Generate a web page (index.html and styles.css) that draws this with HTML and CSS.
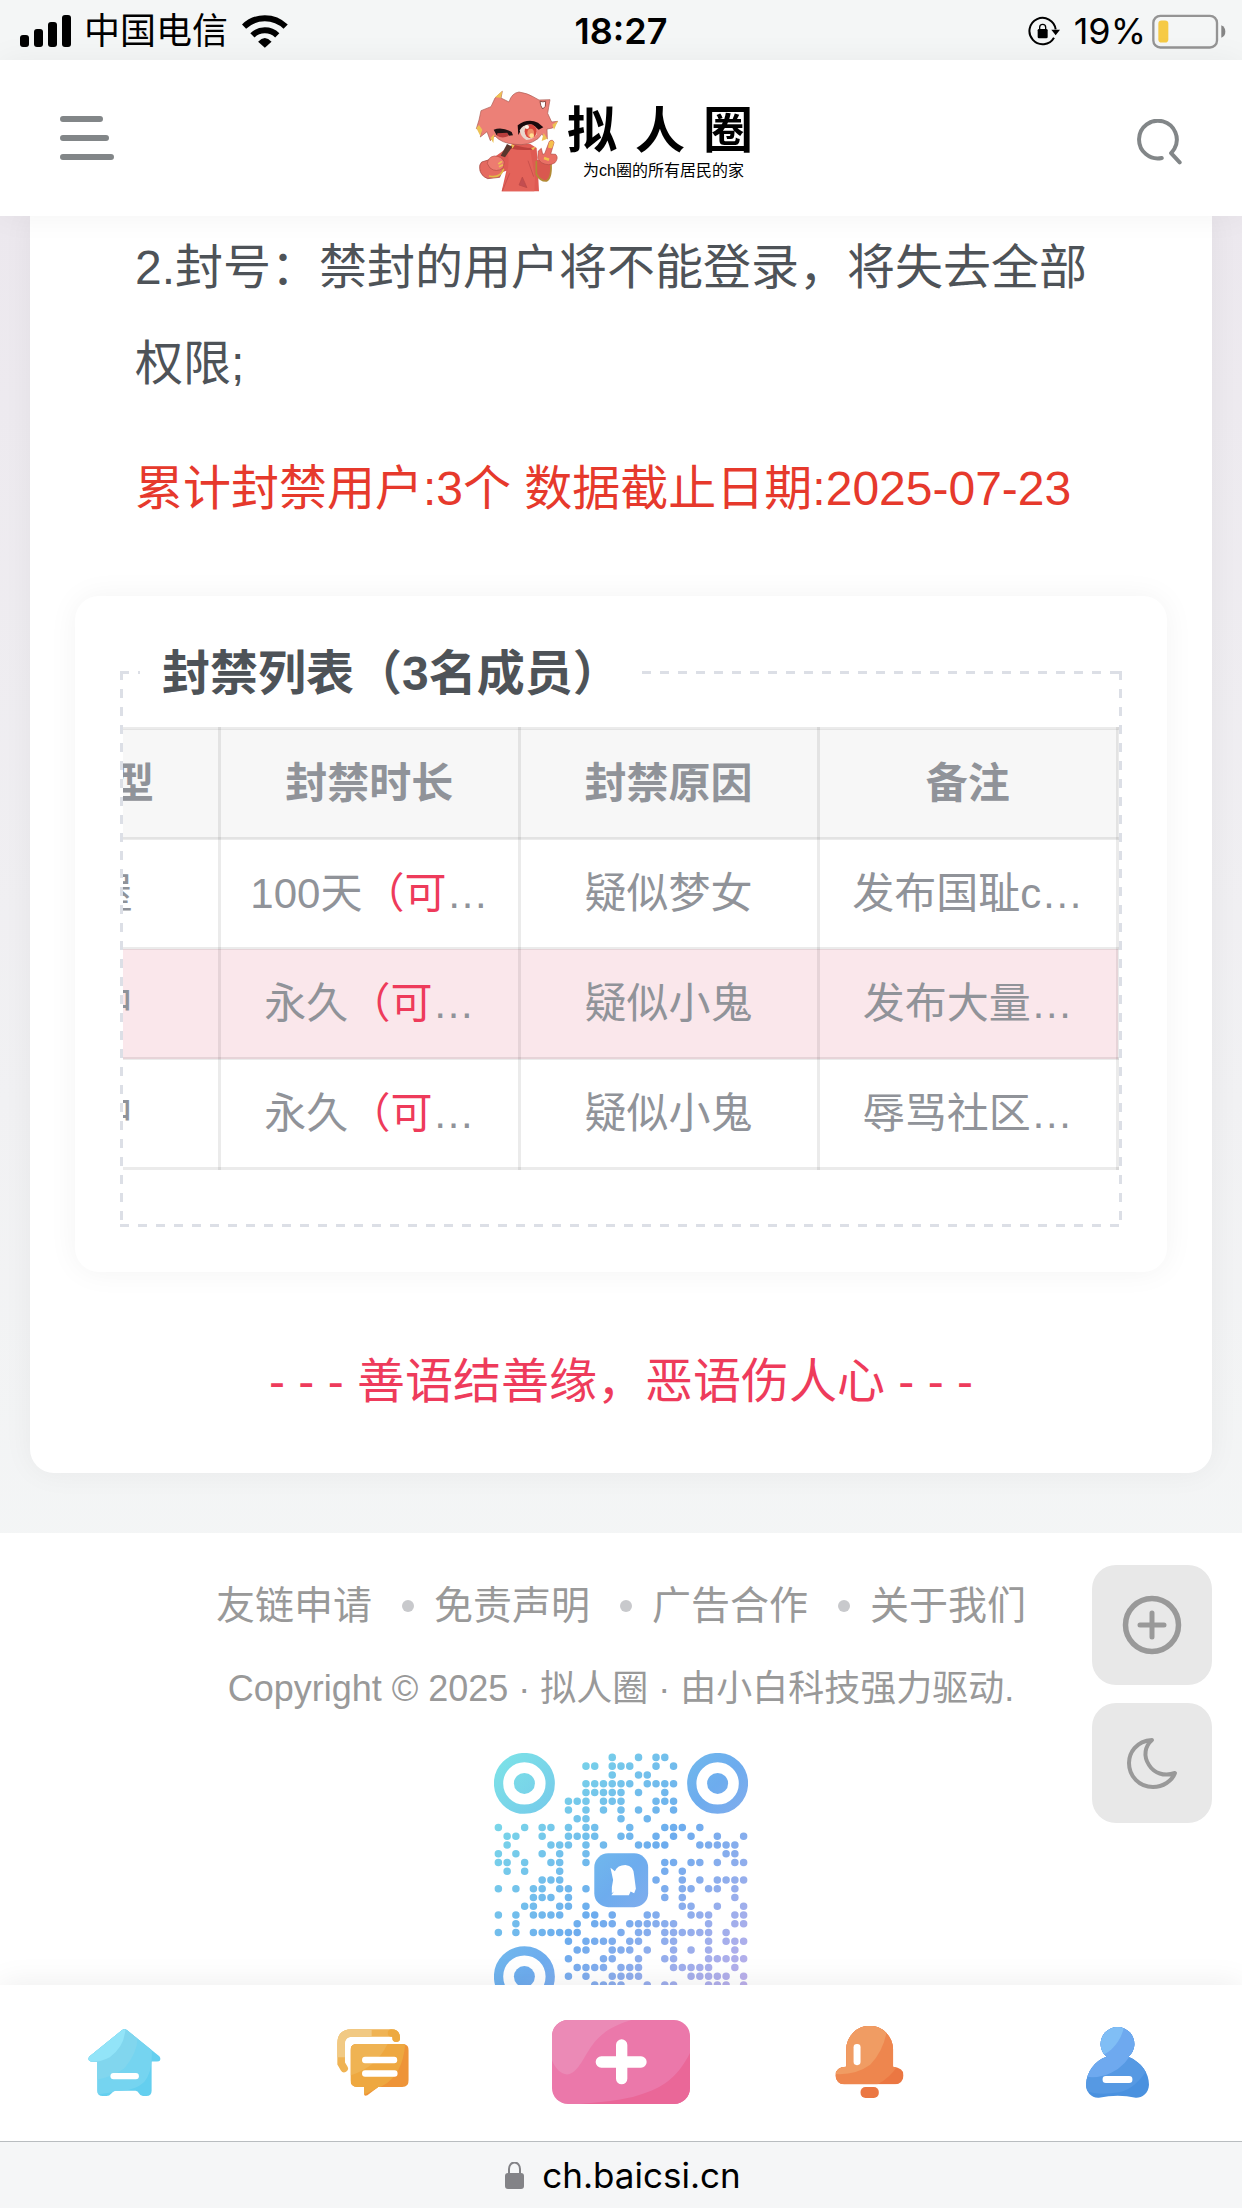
FILE: index.html
```html
<!DOCTYPE html>
<html lang="zh-CN">
<head>
<meta charset="utf-8">
<meta name="viewport" content="width=device-width, initial-scale=1">
<title>拟人圈</title>
<link rel="stylesheet" href="styles.css">
</head>
<body>
<div class="status">
  <div class="status-side">
    <svg class="signal" viewBox="0 0 51 32" aria-hidden="true"><rect x="0" y="20" width="9" height="12" rx="3"/><rect x="14" y="14" width="9" height="18" rx="3"/><rect x="28" y="7" width="9" height="25" rx="3"/><rect x="42" y="0" width="9" height="32" rx="3"/></svg>
    <span class="carrier">中国电信</span>
    <svg class="wifi" viewBox="730 38 137 100" aria-hidden="true"><path d="M736 75A89 89 0 0 1 860 75" fill="none" stroke="#000" stroke-width="18"/><path d="M761 101A53 53 0 0 1 835 101" fill="none" stroke="#000" stroke-width="18"/><path d="M778 120Q798 98 818 120L798 138Z"/></svg>
  </div>
  <time class="clock">18:27</time>
  <div class="status-side status-end">
    <svg class="rotation" viewBox="142 50 96 90" aria-hidden="true"><path d="M220 115A39.500 39.500 0 1 1 225 90" fill="none" stroke="#000" stroke-width="6"/><path d="M212 91H238L225 108Z"/><rect x="171" y="89" width="30" height="28" rx="4"/><path d="M177 90V84a9 9 0 0 1 18 0V90" fill="none" stroke="#000" stroke-width="4"/></svg>
    <span class="percent">19%</span>
    <svg class="battery" viewBox="518 38 222 104" aria-hidden="true"><rect x="522" y="43" width="191" height="95" rx="21" fill="none" stroke="#949494" stroke-width="7"/><rect x="537" y="57" width="30" height="66" rx="10" fill="#f6ca45"/><path d="M726 71Q738 76 738 90T726 109Z" fill="#858585"/></svg>
  </div>
</div>

<header class="header">
  <button class="icon-button" type="button" aria-label="菜单">
    <svg class="menu-icon" viewBox="0 0 54 44"><path d="M3 3H40M3 22H46M3 41H51" stroke="#828688" stroke-width="6" stroke-linecap="round"/></svg>
  </button>
  <a class="logo" href="#">
    <svg class="mascot" viewBox="46 86 252 310" aria-hidden="true">
      <path d="M138 265L160 250H212L231 262L238 392H126L140 330L98 345L60 330L66 308L92 298Z" fill="#df5a53"/>
      <path d="M60 324Q62 345 84 354L120 350L129 328L116 305L92 296L66 304Q58 312 60 324Z" fill="#e56a60" stroke="#9b3f37" stroke-width="2"/>
      <path d="M88 346Q122 354 132 324" fill="none" stroke="#e2bb45" stroke-width="5"/>
      <path d="M230 296L228 340Q238 362 260 361Q278 352 273 308Z" fill="#d9584f"/>
      <path d="M230 300V340Q242 362 260 361Q276 354 274 310" fill="none" stroke="#b28b35" stroke-width="5"/>
      <path d="M141 272Q158 300 126 392H224L226 352L210 258H160Z" fill="#e4635a"/>
      <path d="M188 349L202 381L178 373ZM150 338L128 391M205 300L222 348" fill="#c34d50" stroke="#bd4945" stroke-width="2"/>
      <path d="M58 178L64 150L94 138L106 112L128 92L124 112L148 124Q156 97 178 94Q204 98 220 108L238 118L271 117Q266 145 264 158L276 184L294 182L279 202L262 205L263 235L246 221L235 234Q203 257 166 251Q126 248 106 226L92 240L82 213L62 229L66 207L50 204Z" fill="#ec8077" stroke="#a95b52" stroke-width="2"/>
      <path d="M106 110L128 91L124 111ZM50 202L58 193L68 207L62 226ZM278 192L295 180L283 207ZM252 217L263 234L246 241ZM92 232L104 220L101 247Z" fill="#edc255"/>
      <path d="M241 122Q250 125 258 122L257 137L249 145Q242 137 241 122Z" fill="#fff" stroke="#8d4b43" stroke-width="3"/>
      <path d="M102 207Q128 198 156 214L160 224L148 225L144 219L111 224Z" fill="#201315"/>
      <path d="M112 225Q127 235 147 226L143 216L113 218Z" fill="#b83d3c"/>
      <path d="M174 194Q204 172 235 186L251 200L237 207L224 196L190 197L176 223Z" fill="#19090c"/>
      <path d="M180 209Q190 190 217 192Q233 200 231 221Q222 237 200 238Q184 231 180 209Z" fill="#ead7ce"/>
      <ellipse cx="213" cy="212" rx="18" ry="21" fill="#d9473e"/><ellipse cx="213" cy="217" rx="10" ry="13" fill="#ef8d66"/><circle cx="216" cy="225" r="7" fill="#ffdf91"/><circle cx="202" cy="199" r="6" fill="#fff0e6"/>
      <path d="M158 251Q190 263 227 262L218 267Q180 270 154 264Z" fill="#bd413d"/>
      <path d="M154 251L165 254L158 264ZM214 262L229 258L220 269Z" fill="#edc255"/>
      <path d="M142 250L158 258L136 290L123 285Z" fill="#59362d"/>
      <path d="M83 309Q85 289 104 286Q126 286 134 304L130 322Q110 337 91 322Z" fill="#ed7c70" stroke="#b34d45" stroke-width="2"/>
      <path d="M116 310L127 302M118 318L130 312" stroke="#edc255" stroke-width="5"/>
      <path d="M236 271L245 263L249 281L255 279L269 242Q280 234 283 246L273 280L288 281Q298 292 286 306Q268 318 245 306L234 293Z" fill="#e96f65" stroke="#b34d45" stroke-width="2"/>
      <path d="M268 245Q278 234 283 246L277 263L265 261Z" fill="#f5c04e"/><path d="M253 292L268 297" stroke="#f2c14e" stroke-width="8"/>
    </svg>
    <span class="logo-words">
      <span class="logo-name"><span>拟</span><span>人</span><span>圈</span></span>
      <span class="logo-tag">为ch圈的所有居民的家</span>
    </span>
  </a>
  <button class="icon-button search" type="button" aria-label="搜索">
    <svg class="search-icon" viewBox="471 359 136 137"><path d="M546 476A57 57 0 1 1 584 448Q579 456 574 461L600 489" fill="none" stroke="#828688" stroke-width="12" stroke-linecap="round" stroke-linejoin="round"/></svg>
  </button>
</header>

<main class="page">
  <article class="card">
    <div class="prose">
      <p>2.封号：禁封的用户将不能登录，将失去全部权限;</p>
      <p class="total">累计封禁用户:3个 数据截止日期:2025-07-23</p>
    </div>
    <section class="panel">
      <fieldset class="list">
        <legend>封禁列表（3名成员）</legend>
        <div class="scroller">
          <table>
            <thead>
              <tr><th>封禁类型</th><th>封禁时长</th><th>封禁原因</th><th>备注</th></tr>
            </thead>
            <tbody>
              <tr><td>小黑屋</td><td>100天<em>（可</em>…</td><td>疑似梦女</td><td>发布国耻c…</td></tr>
              <tr class="marked"><td>封禁中</td><td>永久<em>（可</em>…</td><td>疑似小鬼</td><td>发布大量…</td></tr>
              <tr><td>封禁中</td><td>永久<em>（可</em>…</td><td>疑似小鬼</td><td>辱骂社区…</td></tr>
            </tbody>
          </table>
        </div>
      </fieldset>
    </section>
    <p class="motto">- - - 善语结善缘，恶语伤人心 - - -</p>
  </article>

  <footer class="footer">
    <nav class="links"><a href="#">友链申请</a><a href="#">免责声明</a><a href="#">广告合作</a><a href="#">关于我们</a></nav>
    <p class="copyright">Copyright © 2025 · 拟人圈 · 由小白科技强力驱动.</p>
    <svg class="qr" viewBox="0 0 29 29" role="img" aria-label="二维码">
      <defs><linearGradient id="qr-ink" gradientUnits="userSpaceOnUse" x1="0" y1="0" x2="29" y2="29"><stop offset="0" stop-color="#7de4e7"/><stop offset=".5" stop-color="#6dacee"/><stop offset="1" stop-color="#c8b0ea"/></linearGradient></defs>
      <g fill="none" stroke="url(#qr-ink)">
        <circle cx="3.470" cy="3.470" r="2.950" stroke-width="1.060"/><circle cx="25.530" cy="3.470" r="2.950" stroke-width="1.060"/><circle cx="3.470" cy="25.530" r="2.950" stroke-width="1.060"/>
        <path transform="translate(.5 .5)" stroke-width=".86" stroke-linecap="round" d="M13 0h0m3 0h0m2 0h0m1 0h0
M10 1h0m1 0h0m2 0h0m1 0h0m1 0h0m3 0h0m2 0h0
M13 2h0m3 0h0m1 0h0
M10 3h0m1 0h0m1 0h0m1 0h0m1 0h0m1 0h0m2 0h0m1 0h0m1 0h0m1 0h0
M10 4h0m1 0h0m1 0h0m1 0h0m1 0h0m2 0h0m3 0h0
M8 5h0m1 0h0m1 0h0m2 0h0m1 0h0m1 0h0m4 0h0m1 0h0m1 0h0
M8 6h0m2 0h0m2 0h0m2 0h0m2 0h0m2 0h0m2 0h0
M9 7h0m1 0h0m4 0h0m3 0h0
M0 8h0m3 0h0m2 0h0m1 0h0m2 0h0m2 0h0m1 0h0m4 0h0m4 0h0m1 0h0m1 0h0m2 0h0
M1 9h0m1 0h0m3 0h0m3 0h0m1 0h0m1 0h0m1 0h0m3 0h0m1 0h0m3 0h0m2 0h0m2 0h0m3 0h0m3 0h0
M1 10h0m5 0h0m1 0h0m1 0h0m2 0h0m2 0h0m4 0h0m1 0h0m1 0h0m1 0h0m4 0h0m1 0h0m1 0h0m1 0h0m1 0h0
M0 11h0m2 0h0m3 0h0m2 0h0m3 0h0m16 0h0m1 0h0
M0 12h0m1 0h0m2 0h0m3 0h0m1 0h0m3 0h0m9 0h0m1 0h0m2 0h0m1 0h0m2 0h0m2 0h0m1 0h0
M1 13h0m2 0h0m4 0h0m12 0h0m2 0h0
M5 14h0m1 0h0m1 0h0m11 0h0m3 0h0m2 0h0m2 0h0m1 0h0m1 0h0m1 0h0
M0 15h0m2 0h0m2 0h0m1 0h0m2 0h0m1 0h0m2 0h0m9 0h0m2 0h0m1 0h0m2 0h0m1 0h0m2 0h0
M4 16h0m1 0h0m1 0h0m2 0h0m11 0h0m2 0h0m6 0h0
M3 17h0m1 0h0m3 0h0m1 0h0m2 0h0m11 0h0m1 0h0m3 0h0m3 0h0
M0 18h0m2 0h0m2 0h0m1 0h0m1 0h0m1 0h0m3 0h0m1 0h0m2 0h0m4 0h0m1 0h0m4 0h0m1 0h0m1 0h0m3 0h0m1 0h0
M2 19h0m7 0h0m2 0h0m1 0h0m1 0h0m2 0h0m1 0h0m1 0h0m1 0h0m1 0h0m1 0h0m4 0h0m3 0h0m1 0h0
M0 20h0m2 0h0m2 0h0m1 0h0m1 0h0m1 0h0m1 0h0m1 0h0m5 0h0m2 0h0m1 0h0m2 0h0m1 0h0m1 0h0m1 0h0m1 0h0m1 0h0m2 0h0
M8 21h0m2 0h0m1 0h0m1 0h0m1 0h0m2 0h0m1 0h0m3 0h0m1 0h0m4 0h0m2 0h0m1 0h0m1 0h0
M9 22h0m1 0h0m3 0h0m1 0h0m1 0h0m2 0h0m3 0h0m2 0h0m2 0h0m3 0h0
M8 23h0m4 0h0m1 0h0m3 0h0m3 0h0m1 0h0m4 0h0m1 0h0m1 0h0m1 0h0m1 0h0
M9 24h0m1 0h0m1 0h0m1 0h0m2 0h0m1 0h0m1 0h0m4 0h0m1 0h0m1 0h0m1 0h0m1 0h0m3 0h0
M8 25h0m2 0h0m3 0h0m1 0h0m1 0h0m1 0h0m6 0h0m1 0h0m1 0h0m1 0h0m1 0h0m2 0h0
M11 26h0m1 0h0m1 0h0m1 0h0m3 0h0m2 0h0m1 0h0m4 0h0m1 0h0m1 0h0m2 0h0"/>
      </g>
      <g fill="url(#qr-ink)"><circle cx="3.470" cy="3.470" r="1.200"/><circle cx="25.530" cy="3.470" r="1.200"/><circle cx="3.470" cy="25.530" r="1.200"/><rect x="11.450" y="11.450" width="6.150" height="6.150" rx="1.600"/></g>
      <path fill="#fff" d="M13.300 13.100L13.800 13.500Q14.100 12.800 15 12.800Q16 12.900 16 14L16.200 15.500L16 16L15.600 15.800L15.400 16.250H13.400L13.700 15.800L13.450 16Q13.400 15.300 13.600 14.500Z"/>
    </svg>
  </footer>
</main>

<div class="tools">
  <button type="button" aria-label="添加"><svg viewBox="0 0 60 60"><circle cx="30" cy="30" r="26.500" stroke-width="5.500"/><path d="M30 18V42M18 30H42" stroke-width="5"/></svg></button>
  <button type="button" aria-label="夜间模式"><svg viewBox="0 0 60 60"><path d="M30 7C14 8 7 20 7 30C7 43 17 54 31 54C41 54 50 48 53 40C42 44 32 40 27 32C21 23 23 13 30 7Z" stroke-width="4"/></svg></button>
</div>

<nav class="tabs">
  <a href="#" aria-label="首页"><svg width="73" height="67" viewBox="80 146 218 200"><defs><clipPath id="house"><path d="M182 149Q189 144 196 149L293 227Q299 234 295 240Q293 243 286 243H270V330Q270 346 254 346H244Q236 346 232 338Q229 330 222 330H162Q156 330 149 339Q144 346 135 346H124Q108 346 108 330V243H91Q82 243 81 235Q81 231 87 226Z"/></clipPath></defs><g clip-path="url(#house)"><path fill="#64cfef" d="M80 146H298V346H80Z"/><path fill="#75d4f0" d="M80 146H262Q285 260 248 304Q222 328 180 330L80 346Z"/><path fill="#81d6ee" d="M80 146H224Q240 200 190 262Q155 292 80 302Z"/><path fill="#92e4f8" d="M80 146H192Q188 200 145 230Q110 248 80 244Z"/></g><rect x="147" y="277" width="85" height="19" rx="9" fill="#fff"/></svg></a>
  <a href="#" aria-label="圈子"><svg width="72" height="67" viewBox="828 146 216 202"><defs><clipPath id="bubble"><path d="M888 191H1024Q1044 191 1044 211V300Q1044 321 1024 321H952L919 346Q909 350 909 342V321H889Q868 321 868 300V211Q868 191 888 191Z"/></clipPath></defs><path d="M849 265L840 250V190Q840 158 872 158H992Q1006 158 1006 174" fill="none" stroke="#efb354" stroke-width="23" stroke-linecap="round"/><path d="M840 231V190Q840 158 872 158H932" fill="none" stroke="#f1c983" stroke-width="23"/><path d="M992 158Q1006 158 1006 174" fill="none" stroke="#eda940" stroke-width="23" stroke-linecap="round"/><g clip-path="url(#bubble)"><path fill="#ee9438" d="M868 191H1044V348H868Z"/><path fill="#eea840" d="M868 191H1033Q1026 285 964 318L900 348H868Z"/><path fill="#efb353" d="M868 191H980Q945 262 868 286Z"/></g><rect x="903" y="230" width="106" height="19" rx="9" fill="#fff"/><rect x="903" y="270" width="107" height="20" rx="9" fill="#fff"/></svg></a>
  <a href="#" aria-label="发布"><svg width="138" height="84" viewBox="97 119 414 252"><defs><clipPath id="post"><rect x="97" y="119" width="414" height="252" rx="48"/></clipPath></defs><g clip-path="url(#post)"><path fill="#eb78aa" d="M97 119H511V371H97Z"/><path fill="#eb8ab6" d="M97 119H335C205 157 210 230 164 273C139 295 111 275 97 240Z"/><path fill="#ea6798" d="M511 218C478 282 440 318 370 340Q320 360 180 371H511Z"/></g><path d="M306 194V295M245 245H364" stroke="#fff" stroke-width="34" stroke-linecap="round"/></svg></a>
  <a href="#" aria-label="消息"><svg width="69" height="72" viewBox="947 137 206 217"><defs><clipPath id="bell"><path d="M980 260V207A70 70 0 0 1 1121 207V260Q1153 263 1153 286Q1150 312 1127 313H974Q950 311 947 286Q949 260 980 260Z"/></clipPath></defs><g clip-path="url(#bell)"><path fill="#eb7742" d="M947 137H1153V313H947Z"/><path fill="#ee864e" d="M947 137H1140V250Q1110 296 1073 313H947Z"/><path fill="#f09c63" d="M947 137H1105Q1095 210 1052 254Q1008 286 947 282Z"/></g><rect x="1002" y="191" width="21" height="64" rx="10" fill="#fff"/><rect x="1023" y="321" width="55" height="33" rx="15" fill="#eb7742"/></svg></a>
  <a href="#" aria-label="我的"><svg width="63" height="72" viewBox="142 137 190 217"><defs><clipPath id="person"><path d="M204 230A51 51 0 1 1 270 230C310 247 332 280 332 314C331 342 309 354 292 353Q239 342 181 353C160 355 142 336 142 313C144 277 168 242 204 230Z"/></clipPath></defs><g clip-path="url(#person)"><path fill="#4a91df" d="M142 137H332V354H142Z"/><path fill="#5699e3" d="M142 137H332V260Q294 325 243 337Q175 347 142 332Z"/><path fill="#6ea9ef" d="M142 137H290V200Q264 256 218 278Q181 296 142 290Z"/><path fill="#80bef5" d="M142 137H257Q249 179 219 207Q200 224 180 228Z"/></g><rect x="192" y="288" width="90" height="21" rx="10" fill="#fff"/></svg></a>
</nav>

<div class="address">
  <svg class="lock" viewBox="0 0 19 27" aria-hidden="true"><rect y="11" width="19" height="16" rx="3" fill="#838387"/><path d="M4 13V7a5 6 0 0 1 11 0V13" fill="none" stroke="#838387" stroke-width="2"/></svg>
  <span>ch.baicsi.cn</span>
</div>
</body>
</html>
```
FILE: styles.css
```css
* {
  box-sizing: border-box;
}

body {
  margin: 0;
  height: 100vh;
  display: flex;
  flex-direction: column;
  overflow: hidden;
  background: #f4f6f6;
  color: #4e5358;
  font-family: "Liberation Sans", "Noto Sans CJK SC", sans-serif;
}

p {
  margin: 0;
}

a {
  color: inherit;
  text-decoration: none;
}

button {
  padding: 0;
  border: 0;
  background: none;
}

svg {
  display: block;
}

/* Phone status bar */
.status {
  flex: none;
  height: 60px;
  display: grid;
  grid-template-columns: 1fr auto 1fr;
  align-items: center;
  padding: 2px 16px 0 16px;
  color: #000;
  font-family: Inter, "Noto Sans CJK SC", sans-serif;
  font-size: 36px;
  line-height: 58px;
}

.status-side {
  display: flex;
  align-items: center;
}

.status-end {
  justify-content: flex-end;
}

.signal {
  width: 51px;
  height: 32px;
  margin-left: 4px;
}

.carrier {
  margin: 0 14px 0 13px;
}

.wifi {
  width: 46px;
  height: 34px;
}

.clock {
  font-size: 36px;
  font-weight: 600;
}

.rotation {
  width: 32px;
  height: 30px;
}

.percent {
  margin: 0 6px 0 14px;
  font-size: 36px;
}

.battery {
  width: 74px;
  height: 35px;
}

/* Site header */
.header {
  position: relative;
  z-index: 1;
  flex: none;
  height: 156px;
  display: grid;
  grid-template-columns: 1fr auto 1fr;
  align-items: center;
  padding: 0 60px;
  background: #fff;
  box-shadow: 0 0 30px rgba(0, 0, 0, .05);
}

.icon-button {
  justify-self: start;
}

.search {
  justify-self: end;
  padding-top: 8px;
}

.menu-icon {
  width: 54px;
  height: 44px;
}

.search-icon {
  width: 45px;
  height: 46px;
}

.logo {
  display: flex;
  align-items: center;
  gap: 8px;
  padding-top: 6px;
  color: #000;
}

.mascot {
  width: 84px;
  height: 104px;
}

.logo-words {
  display: flex;
  flex-direction: column;
  width: 200px;
}

.logo-name {
  display: flex;
  gap: 18px;
  font-size: 50px;
  font-weight: 700;
  line-height: 60px;
}

.logo-tag {
  padding-left: 16px;
  font-size: 16px;
  line-height: 20px;
}

/* Scrolled page content */
.page {
  flex: 1;
  min-height: 0;
  overflow: hidden;
  background: linear-gradient(#ece8ee, #f1f1f3 50%, #f4f6f6 80%);
}

.card {
  margin: 0 30px 60px;
  padding: 4px 45px 43px;
  border-radius: 0 0 24px 24px;
  background: #fff;
  box-shadow: 0 0 30px rgba(0, 0, 0, .05);
}

.prose {
  padding: 0 60px;
  font-size: 48px;
  line-height: 96px;
}

.total {
  margin-top: 29px;
  color: #e6392c;
}

.panel {
  margin-top: 59px;
  padding: 45px;
  border-radius: 24px;
  box-shadow: 0 0 30px rgba(0, 0, 0, .05);
}

/* Dashed frame, drawn with long dashes along all four edges */
.list {
  --across: repeating-linear-gradient(90deg, #dcdfe6 0 9px, transparent 9px 18px);
  --down: repeating-linear-gradient(#dcdfe6 0 9px, transparent 9px 18px);
  min-width: 0;
  margin: 0;
  padding: 24px 0 54px;
  border: 3px solid transparent;
  background:
    var(--across) top / 100% 3px no-repeat border-box,
    var(--across) bottom / 100% 3px no-repeat border-box,
    var(--down) left / 3px 100% no-repeat border-box,
    var(--down) right / 3px 100% no-repeat border-box;
}

.list legend {
  margin-left: 17px;
  padding: 4px 14px 0 22px;
  background: #fff;
  font-size: 48px;
  font-weight: 600;
  line-height: 58px;
}

/* The table is wider than its frame and rests at its right end */
.scroller {
  display: flex;
  justify-content: flex-end;
  overflow: hidden;
}

table {
  flex: none;
  width: 1200px;
  table-layout: fixed;
  border-collapse: collapse;
  color: #909399;
  font-size: 42px;
  line-height: 60px;
  text-align: center;
}

th,
td {
  height: 110px;
  padding: 0;
  border: 3px solid rgba(0, 0, 0, .08);
  white-space: nowrap;
}

th {
  background: #f7f7f7;
  font-weight: 700;
}

.marked {
  background: #fae7eb;
}

em {
  color: #ee3b5b;
  font-style: normal;
}

.motto {
  margin-top: 62px;
  color: #ee3b5b;
  font-size: 48px;
  line-height: 96px;
  text-align: center;
}

.footer {
  display: flex;
  flex-direction: column;
  align-items: center;
  padding: 46px 0 60px;
  background: #fff;
  color: #999;
}

.links {
  display: flex;
  font-size: 39px;
  line-height: 54px;
}

.links a {
  display: flex;
  align-items: center;
}

.links a + a::before {
  content: "";
  width: 12px;
  height: 12px;
  margin: 0 20px 0 30px;
  border-radius: 50%;
  background: #c8c9cc;
}

.copyright {
  margin: 29px 0 37px;
  font-size: 36px;
  line-height: 54px;
}

.qr {
  width: 254px;
  height: 254px;
}

/* Floating tools */
.tools {
  position: fixed;
  right: 30px;
  bottom: 385px;
  display: grid;
  gap: 18px;
}

.tools button {
  display: grid;
  place-items: center;
  width: 120px;
  height: 120px;
  border-radius: 24px;
  background: #e8e8e8;
}

.tools svg {
  width: 60px;
  height: 60px;
  fill: none;
  stroke: #999;
  stroke-linecap: round;
  stroke-linejoin: round;
}

/* Bottom tab bar */
.tabs {
  position: relative;
  flex: none;
  height: 156px;
  display: grid;
  grid-template-columns: repeat(5, 1fr);
  place-items: center;
  padding-bottom: 2px;
  background: #fff;
  box-shadow: 0 0 30px rgba(0, 0, 0, .08);
}

/* Browser address bar */
.address {
  position: relative;
  flex: none;
  height: 67px;
  display: flex;
  align-items: center;
  justify-content: center;
  gap: 18px;
  padding-left: 4px;
  border-top: 1px solid #b9bdc0;
  background: #f5f6f7;
  color: #000;
  font-family: Inter, sans-serif;
  font-size: 35px;
}

.lock {
  width: 19px;
  height: 27px;
}
```
